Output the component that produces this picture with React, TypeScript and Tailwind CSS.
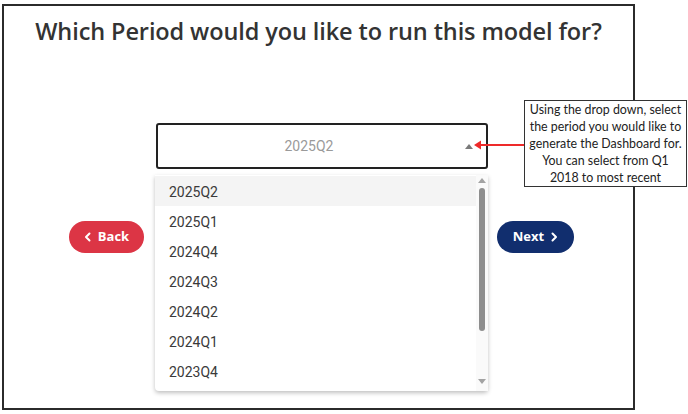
import React from 'react'

const periods = ['2025Q2', '2025Q1', '2024Q4', '2024Q3', '2024Q2', '2024Q1', '2023Q4']

function Chevron({ dir }: { dir: 'left' | 'right' }): React.JSX.Element {
  return (
    <svg width="8" height="10" viewBox="0 0 8 10" fill="none" stroke="currentColor" strokeWidth="2" strokeLinecap="round" strokeLinejoin="round">
      {dir === 'left' ? <path d="M5.5 1.5 2 5l3.5 3.5" /> : <path d="M2.5 1.5 6 5 2.5 8.5" />}
    </svg>
  )
}

export default function App(): React.JSX.Element {
  return (
    <div className="relative w-[688px] h-[414px] bg-white overflow-hidden font-['Open_Sans',sans-serif]">
      <div className="ml-[2px] mt-[4px] w-[633px] h-[406px] border-2 border-[#2b2b2b] flex flex-col">
        <h1 className="pt-[9px] text-center text-[23.5px] leading-[32px] font-semibold text-[#333] tracking-[-0.1px]">
          Which Period would you like to run this model for?
        </h1>

        <div className="flex items-start mt-[76px]">
          <button className="ml-[65px] mt-[98px] w-[75px] h-[32px] rounded-full bg-[#dc3545] text-white text-[13px] font-bold flex items-center justify-center gap-[6px]">
            <Chevron dir="left" />
            Back
          </button>

          <div className="relative ml-[12px] w-[332px]">
            <div className="h-[46px] rounded-[3px] border-2 border-[#222] flex items-center justify-center pr-[26px] relative font-['Roboto',sans-serif] text-[14px] text-[#9a9a9a]">
              2025Q2
              <span className="absolute right-[13px] top-[19px] w-0 h-0 border-l-[4px] border-r-[4px] border-b-[5px] border-l-transparent border-r-transparent border-b-[#7a7a7a]" />
            </div>

            <div className="absolute left-[-1px] top-[52px] w-[333px] h-[216px] bg-white rounded-b-[4px] shadow-[0_2px_4px_rgba(0,0,0,0.25)] flex font-['Roboto',sans-serif] text-[14px] text-[#3a3a3a] z-10">
              <div className="flex-1 flex flex-col pt-[1px]">
                {periods.map((p, i) => (
                  <div key={p} className={`h-[30px] flex items-center pl-[14px] pt-[2px] ${i === 0 ? 'bg-[#f4f4f4]' : ''}`}>
                    {p}
                  </div>
                ))}
              </div>
              <div className="w-[12px] bg-[#fafafa] flex flex-col items-center pt-[3px]">
                <span className="w-0 h-0 border-l-[4px] border-r-[4px] border-b-[5px] border-l-transparent border-r-transparent border-b-[#a3a3a3]" />
                <span className="mt-[5px] w-[6px] h-[143px] rounded-full bg-[#8e8e8e]" />
                <span className="mt-auto mb-[7px] w-0 h-0 border-l-[4px] border-r-[4px] border-t-[5px] border-l-transparent border-r-transparent border-t-[#a3a3a3]" />
              </div>
            </div>
          </div>

          <button className="ml-[9px] mt-[98px] w-[77px] h-[32px] rounded-full bg-[#112e6e] text-white text-[13px] font-bold flex items-center justify-center gap-[6px]">
            Next
            <Chevron dir="right" />
          </button>
        </div>
      </div>

      {/* red pointer arrow */}
      <svg className="absolute left-[472px] top-[139px]" width="54" height="12" viewBox="0 0 54 12">
        <line x1="5" y1="6" x2="53" y2="6" stroke="#ee2a2a" strokeWidth="2" />
        <path d="M2 6 9 1.5v9z" fill="#ee2a2a" />
      </svg>

      {/* callout */}
      <div className="absolute left-[524px] top-[100px] w-[163px] h-[87px] bg-white border-[1.5px] border-[#333] flex items-center justify-center text-center text-[12.4px] leading-[17px] text-[#222] font-['Lato',sans-serif]">
        <p>
          Using the drop down, select<br />
          the period you would like to<br />
          generate the Dashboard for.<br />
          You can select from Q1<br />
          2018 to most recent
        </p>
      </div>
    </div>
  )
}
